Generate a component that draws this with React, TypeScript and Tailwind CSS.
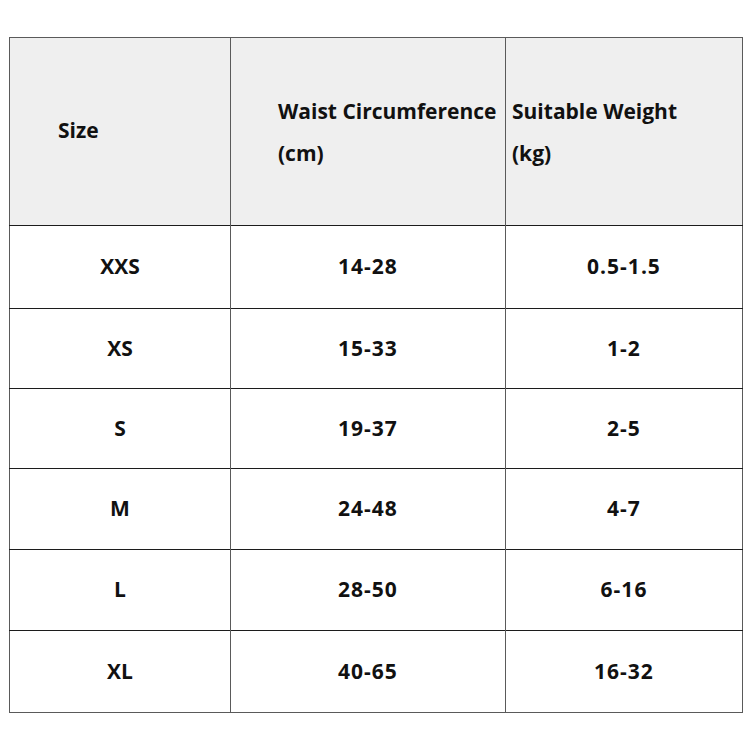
const rows = [
  { size: "XXS", waist: "14-28", weight: "0.5-1.5", h: "h-[83px]" },
  { size: "XS", waist: "15-33", weight: "1-2", h: "h-[80px]" },
  { size: "S", waist: "19-37", weight: "2-5", h: "h-[80px]" },
  { size: "M", waist: "24-48", weight: "4-7", h: "h-[81px]" },
  { size: "L", waist: "28-50", weight: "6-16", h: "h-[81px]" },
  { size: "XL", waist: "40-65", weight: "16-32", h: "h-[82px]" },
];

export default function App() {
  return (
    <div className="w-[750px] h-[750px] bg-white pt-[37px] pl-[9px] font-['Open_Sans',sans-serif] text-[#111] font-bold text-[21px]">
      <table className="border-collapse table-fixed w-[733px] border border-[#5a5a5a]">
        <colgroup>
          <col className="w-[221px]" />
          <col className="w-[275px]" />
          <col className="w-[237px]" />
        </colgroup>
        <thead>
          <tr className="h-[188px] bg-[#efefef] border-b border-[#1c1c1c]">
            <th className="text-left font-bold pl-[48px] border-r border-[#5a5a5a] align-middle">
              <span className="relative top-[-1px]">Size</span>
            </th>
            <th className="text-left font-bold pl-[47px] pr-0 border-r border-[#5a5a5a] align-middle leading-[42px] whitespace-nowrap">
              Waist Circumference
              <br />
              (cm)
            </th>
            <th className="text-left font-bold pl-[6px] align-middle leading-[42px] whitespace-nowrap">
              Suitable Weight
              <br />
              (kg)
            </th>
          </tr>
        </thead>
        <tbody>
          {rows.map((r) => (
            <tr key={r.size} className={`${r.h} border-b border-[#1c1c1c] last:border-[#5a5a5a]`}>
              <td className="text-center border-r border-[#5a5a5a]">{r.size}</td>
              <td className="text-center border-r border-[#5a5a5a] tracking-[1px]">{r.waist}</td>
              <td className="text-center tracking-[1px]">{r.weight}</td>
            </tr>
          ))}
        </tbody>
      </table>
    </div>
  );
}
